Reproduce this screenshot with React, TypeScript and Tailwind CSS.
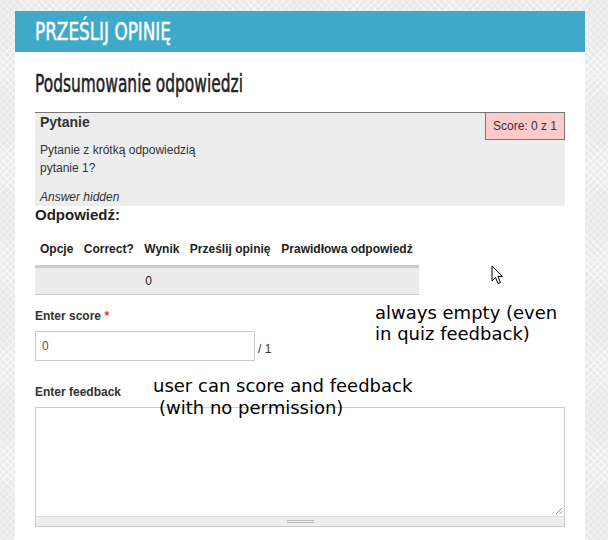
import React from 'react';

const sans = { fontFamily: '"Liberation Sans", Arial, sans-serif' };
const condensed = { fontFamily: '"DejaVu Sans Condensed", "Liberation Sans Narrow", sans-serif' };

function Cursor() {
  return (
    <svg width="13" height="20" viewBox="0 0 13 20" className="absolute left-[491px] top-[265px]">
      <path
        d="M1 1 L1 16 L4.5 12.5 L7 18.5 L9.5 17.5 L7 11.5 L11.5 11.5 Z"
        fill="#fff"
        stroke="#000"
        strokeWidth="1"
        strokeLinejoin="round"
      />
    </svg>
  );
}

export default function App() {
  return (
    <div className="relative min-h-[540px] w-[608px] overflow-hidden bg-[#eaeaea] bg-[repeating-linear-gradient(45deg,rgba(255,255,255,0.5)_0_1px,transparent_1px_5px),repeating-linear-gradient(-45deg,rgba(255,255,255,0.5)_0_1px,transparent_1px_5px)] pt-[11px] pl-[15px]">
      <div className="w-[570px] min-h-[529px] bg-white">
        <div className="flex h-[41px] items-center bg-[#3ea9c9] pl-5">
          <span
            className="inline-block origin-left scale-x-[0.78] text-[24px] leading-none text-white [-webkit-text-stroke:0.5px_white]"
            style={condensed}
          >
            PRZEŚLIJ OPINIĘ
          </span>
        </div>

        <div className="px-5 pt-[17px]" style={sans}>
          <h2 className="text-[24px] leading-[30px] text-[#222] [-webkit-text-stroke:0.5px_#222]" style={condensed}>
            <span className="inline-block origin-left scale-x-[0.715]">Podsumowanie odpowiedzi</span>
          </h2>

          <div className="mt-[13px] h-[94px] border-t border-[#777] bg-[#ededed] pl-[5px] text-[#333]">
            <div className="flex items-start justify-between">
              <div className="pt-[1px] text-[14px] font-bold leading-[17px]">Pytanie</div>
              <div className="flex h-[27px] items-center border border-t-0 border-[#777] bg-[#ffcaca] px-[7px] text-[12px]">
                Score: 0 z 1
              </div>
            </div>
            <div className="mt-[1px] text-[12px] leading-[18px]">
              <p>Pytanie z krótką odpowiedzią</p>
              <p>pytanie 1?</p>
              <p className="mt-[11px] italic">Answer hidden</p>
            </div>
          </div>

          <div className="text-[15px] font-bold leading-[18px] text-[#222]">Odpowiedź:</div>

          <table className="mt-[16px] w-[384px] border-collapse text-[12px] text-[#222]">
            <thead>
              <tr className="border-b-[3px] border-[#ccc]">
                <th className="px-[5px] pb-[7px] text-left font-bold">Opcje</th>
                <th className="px-[5px] pb-[7px] text-left font-bold">Correct?</th>
                <th className="px-[5px] pb-[7px] text-left font-bold">Wynik</th>
                <th className="px-[5px] pb-[7px] text-left font-bold">Prześlij opinię</th>
                <th className="px-[5px] pb-[7px] text-left font-bold">Prawidłowa odpowiedź</th>
              </tr>
            </thead>
            <tbody>
              <tr className="h-[28px] border-b border-[#ccc] bg-[#ececec]">
                <td className="px-[5px]"></td>
                <td className="px-[5px]"></td>
                <td className="px-[5px] pl-[6px]">0</td>
                <td className="px-[5px]"></td>
                <td className="px-[5px]"></td>
              </tr>
            </tbody>
          </table>

          <div className="mt-[14px] text-[12px] font-bold leading-[14px] text-[#333]">
            Enter score <span className="text-[#e33]">*</span>
          </div>
          <div className="mt-[8px] flex items-center">
            <div className="flex h-[30px] w-[220px] items-center border border-[#ccc] px-[6px] text-[12px] text-[#6b4a3a]">
              0
            </div>
            <span className="ml-[3px] mt-[6px] text-[12px] text-[#333]">/ 1</span>
          </div>

          <div className="mt-[24px] text-[12px] font-bold leading-[14px] text-[#333]">Enter feedback</div>
          <div className="mt-[8px] w-[530px] border border-[#ccc]">
            <div className="relative h-[108px] bg-white">
              <svg width="8" height="8" viewBox="0 0 8 8" className="absolute right-[1px] bottom-[1px]">
                <path d="M7 1 L1 7 M7 4.5 L4.5 7" stroke="#888" strokeWidth="1" />
              </svg>
            </div>
            <div className="flex h-[10px] items-center justify-center border-t border-[#ddd] bg-[#eee]">
              <div className="flex w-[27px] flex-col gap-[1px]">
                <div className="h-px bg-[#bbb]"></div>
                <div className="h-px bg-[#bbb]"></div>
              </div>
            </div>
          </div>
        </div>
      </div>

      <div
        className="absolute left-[375px] top-[302px] text-[18px] leading-[21px] text-black"
        style={{ fontFamily: '"DejaVu Sans", sans-serif' }}
      >
        always empty (even
        <br />
        in quiz feedback)
      </div>
      <div
        className="absolute left-[153px] top-[375px] text-[18px] leading-[22px] text-black"
        style={{ fontFamily: '"DejaVu Sans", sans-serif' }}
      >
        user can score and feedback
        <br />
        <span className="pl-[6px]">(with no permission)</span>
      </div>

      <Cursor />
    </div>
  );
}
